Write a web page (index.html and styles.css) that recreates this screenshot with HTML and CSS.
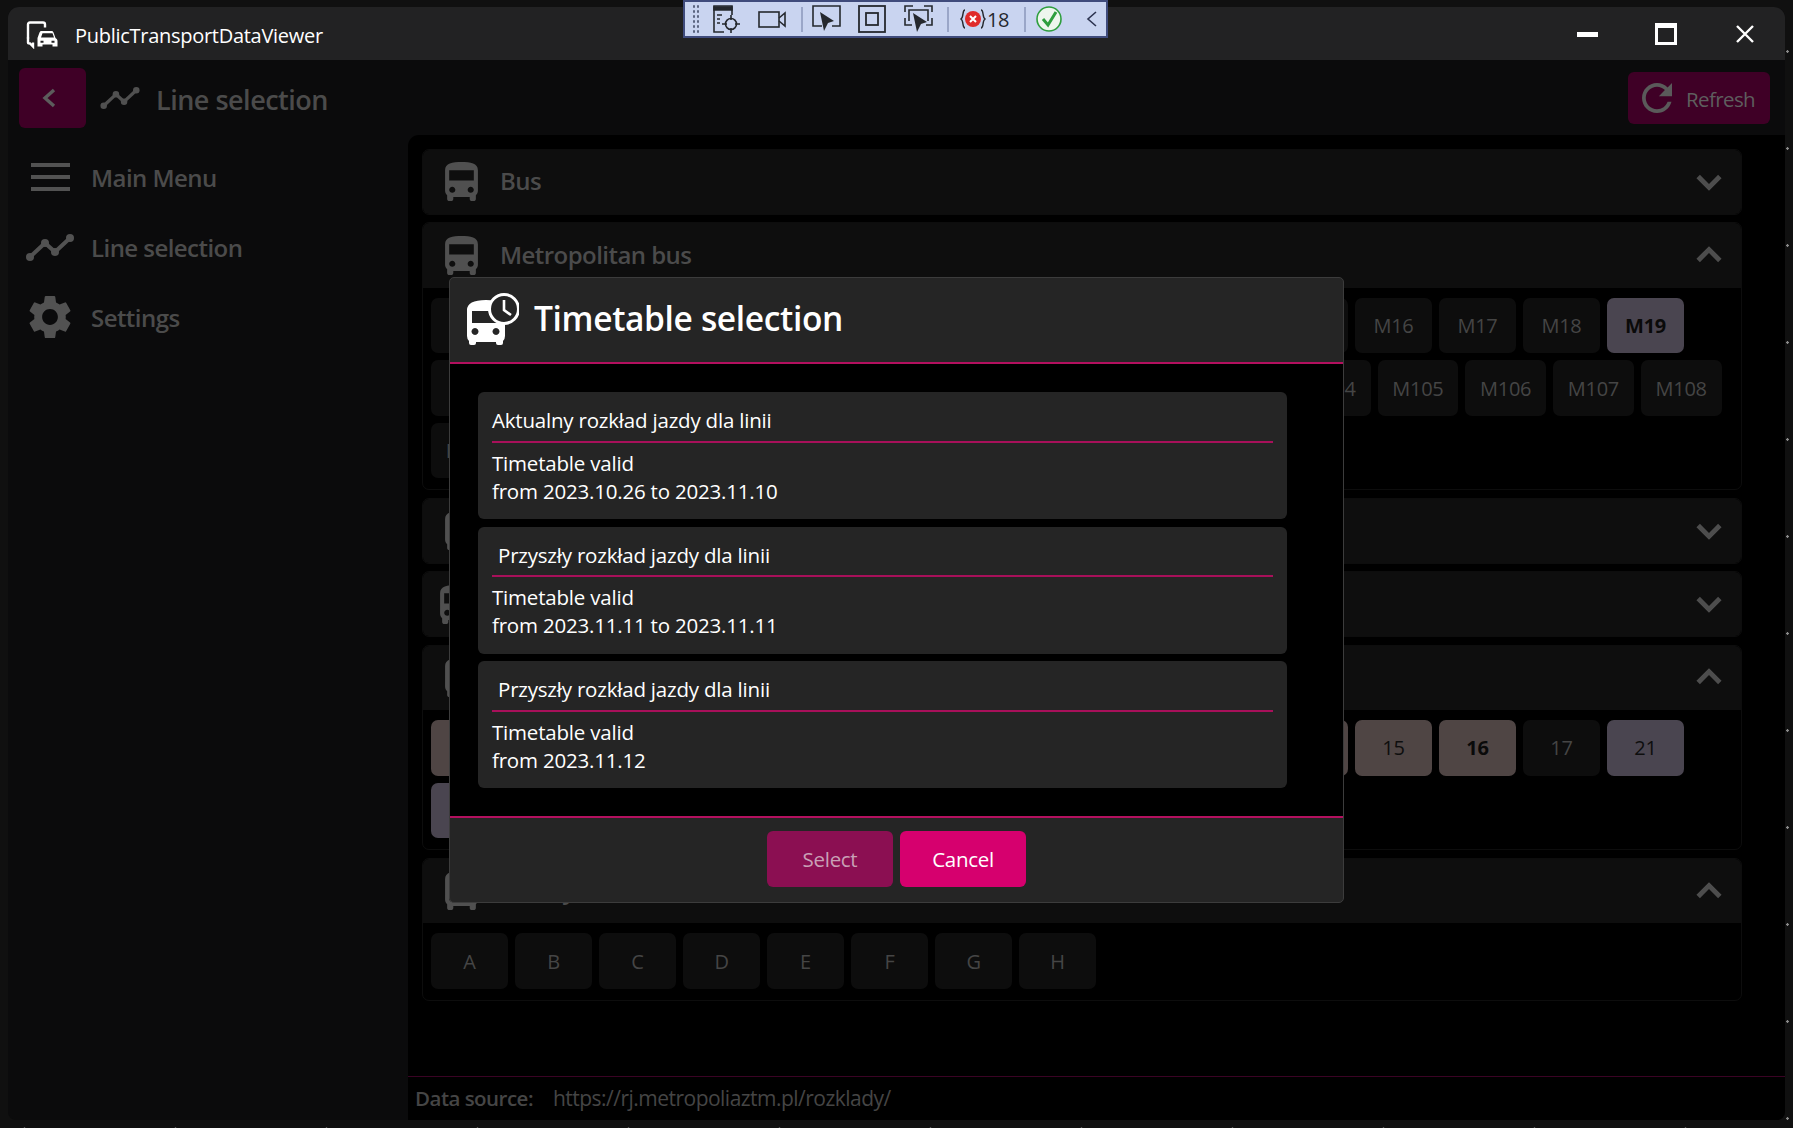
FILE: index.html
```html
<!DOCTYPE html>
<html lang="en">
<head>
<meta charset="utf-8">
<title>PublicTransportDataViewer</title>
<link rel="stylesheet" href="styles.css">
</head>
<body>
<svg class="defs" width="0" height="0" aria-hidden="true">
  <symbol id="bus" viewBox="4 2 16 19"><path d="M4 16c0 .88.39 1.67 1 2.22V20c0 .55.45 1 1 1h1c.55 0 1-.45 1-1v-1h8v1c0 .55.45 1 1 1h1c.55 0 1-.45 1-1v-1.78c.61-.55 1-1.34 1-2.22V6c0-3.5-3.58-4-8-4s-8 .5-8 4v10zm3.5 1c-.83 0-1.5-.67-1.5-1.5S6.67 14 7.5 14s1.5.67 1.5 1.5S8.33 17 7.5 17zm9 0c-.83 0-1.5-.67-1.5-1.5s.67-1.5 1.5-1.5 1.5.67 1.5 1.5-.67 1.5-1.5 1.5zm1.5-6H6V6h12v5z"/></symbol>
  <symbol id="line" viewBox="0 0 48 27"><path d="M4 23 L19 9 L29 18 L44 4" fill="none" stroke="currentColor" stroke-width="4" stroke-linejoin="round"/><circle cx="4" cy="23" r="4"/><circle cx="19" cy="9" r="4"/><circle cx="29" cy="18" r="4"/><circle cx="44" cy="4" r="4"/></symbol>
  <symbol id="down" viewBox="0 0 24 16"><path d="M2 3 L12 13 L22 3" fill="none" stroke="currentColor" stroke-width="4.5"/></symbol>
  <symbol id="up" viewBox="0 0 24 16"><path d="M2 13 L12 3 L22 13" fill="none" stroke="currentColor" stroke-width="4.5"/></symbol>
</svg>

<div class="toolbar">
  <span class="tb-grip"></span>
  <svg class="tb-ico" width="30" height="30" viewBox="0 0 30 30" fill="none" stroke="#25282e" stroke-width="1.6"><path d="M12 28H2V2h18v9" /><path d="M2 3h18v3H2z" fill="#25282e"/><path d="M5 11h5M5 15h3M5 19h3"/><circle cx="19" cy="20" r="5.5"/><path d="M19 11v5M19 24v5M10 20h5M23 20h5"/></svg>
  <svg class="tb-ico" width="30" height="30" viewBox="0 0 30 30" fill="none" stroke="#25282e" stroke-width="1.6"><rect x="1" y="8" width="20" height="15"/><path d="M21 14l6-5v13l-6-5"/></svg>
  <span class="tb-sep"></span>
  <svg class="tb-ico" width="30" height="30" viewBox="0 0 30 30" fill="none" stroke="#25282e" stroke-width="1.6"><path d="M10 22H1V2h27v20h-8"/><path d="M8 8l14 9-6 2-4 8z" fill="#25282e" stroke="none"/></svg>
  <svg class="tb-ico" width="30" height="30" viewBox="0 0 30 30" fill="none" stroke="#25282e" stroke-width="1.8"><rect x="1" y="2" width="26" height="26"/><rect x="8" y="9" width="12" height="12"/></svg>
  <svg class="tb-ico" width="30" height="30" viewBox="0 0 30 30" fill="none" stroke="#25282e" stroke-width="1.6"><path d="M1 8V2h8M20 2h8v6M1 14v7h7M28 14v7h-6M5 17V6h19v11"/><path d="M9 9l14 9-6 2-4 8z" fill="#25282e" stroke="none"/></svg>
  <span class="tb-sep"></span>
  <span class="tb-errors"><svg width="26" height="24" viewBox="0 0 26 24"><circle cx="13" cy="12" r="8" fill="#e02a2a"/><path d="M10 9l6 6M16 9l-6 6" stroke="#fff" stroke-width="2"/><path d="M5 3c-3 0-1 7-4 9 3 2 1 9 4 9M21 3c3 0 1 7 4 9-3 2-1 9-4 9" fill="none" stroke="#25282e" stroke-width="1.4"/></svg>18</span>
  <span class="tb-sep"></span>
  <svg class="tb-ico tb-check" width="28" height="28" viewBox="0 0 28 28"><circle cx="14" cy="14" r="12" fill="#eef6ee" stroke="#2e9e3e" stroke-width="1.6"/><path d="M8 14l5 6 8-13" fill="none" stroke="#2e9e3e" stroke-width="3"/></svg>
  <svg class="tb-chev" width="14" height="20" viewBox="0 0 14 20"><path d="M11 3L3 10l8 7" fill="none" stroke="#2c3350" stroke-width="1.6"/></svg>
</div>

<div class="window">
  <header class="titlebar">
    <svg class="logo" width="33" height="28" viewBox="0 0 33 27"><path d="M2 17V3q0-2 2-2h13q2 0 2 2v3" fill="none" stroke="#fff" stroke-width="2.4"/><path d="M2 16v5q0 1 2 1l3 3v-4" fill="none" stroke="#fff" stroke-width="2.4"/><path d="M12 16l2-6q.5-1.5 2-1.5h10q1.5 0 2 1.5l2 6q2 1 2 3v6h-5v-2H17v2h-5v-6q0-2 0-3zm3.5-.5h13l-1.500-4.500H17zM15 19v2h3v-2zm11 0v2h3v-2z" fill="#fff" fill-rule="evenodd" transform="translate(-.5 1.5) scale(1 .94)"/></svg>
    <span class="app-name">PublicTransportDataViewer</span>
    <div class="win-controls">
      <span class="win-min"></span>
      <span class="win-max"></span>
      <svg class="win-close" width="18" height="18" viewBox="0 0 18 18"><path d="M1 1l16 16M17 1L1 17" stroke="#fff" stroke-width="2.4"/></svg>
    </div>
  </header>

  <div class="appbar">
    <button class="back"><svg width="14" height="20" viewBox="0 0 14 20"><path d="M12 2L3 10l9 8" fill="none" stroke="#5c5c5c" stroke-width="3.4"/></svg></button>
    <svg class="ico-line appbar-line"><use href="#line"/></svg>
    <h1 class="page-title">Line selection</h1>
    <button class="refresh">
      <svg width="30" height="30" viewBox="4 4 16 16"><path d="M17.65 6.35C16.2 4.9 14.21 4 12 4c-4.42 0-7.99 3.58-7.99 8s3.57 8 7.99 8c3.73 0 6.84-2.55 7.73-6h-2.08c-.82 2.33-3.04 4-5.65 4-3.31 0-6-2.69-6-6s2.69-6 6-6c1.66 0 3.14.69 4.22 1.78L13 11h7V4l-2.35 2.35z" fill="#5a5a5a"/></svg>
      <span>Refresh</span>
    </button>
  </div>

  <div class="main">
    <nav class="sidebar">
      <a class="nav-item"><span class="nav-ico"><span class="burger"><i></i><i></i><i></i></span></span>Main Menu</a>
      <a class="nav-item"><span class="nav-ico"><svg class="ico-line nav-line"><use href="#line"/></svg></span>Line selection</a>
      <a class="nav-item"><span class="nav-ico"><svg class="gear" width="44" height="46" viewBox="2.5 1.5 19 21"><path d="M19.14 12.94c.04-.3.06-.61.06-.94 0-.32-.02-.64-.07-.94l2.03-1.58a.49.49 0 0 0 .12-.61l-1.92-3.32a.488.488 0 0 0-.59-.22l-2.39.96c-.5-.38-1.03-.7-1.62-.94l-.36-2.54a.484.484 0 0 0-.48-.41h-3.84c-.24 0-.43.17-.47.41l-.36 2.54c-.59.24-1.13.57-1.62.94l-2.39-.96c-.22-.08-.47 0-.59.22L2.74 8.87c-.12.21-.08.47.12.61l2.03 1.58c-.05.3-.09.63-.09.94s.02.64.07.94l-2.03 1.58a.49.49 0 0 0-.12.61l1.92 3.32c.12.22.37.29.59.22l2.39-.96c.5.38 1.03.7 1.62.94l.36 2.54c.05.24.24.41.48.41h3.84c.24 0 .44-.17.47-.41l.36-2.54c.59-.24 1.13-.56 1.62-.94l2.39.96c.22.08.47 0 .59-.22l1.92-3.32c.12-.22.07-.47-.12-.61l-2.01-1.58zM12 15.6c-1.98 0-3.6-1.62-3.6-3.6s1.62-3.6 3.6-3.6 3.6 1.62 3.6 3.6-1.62 3.6-3.6 3.6z" fill="#525252"/></svg></span>Settings</a>
    </nav>

    <section class="content">
      <div class="cards">
        <article class="card">
          <div class="card-head"><svg class="ico-bus"><use href="#bus"/></svg><h2>Bus</h2><svg class="chev"><use href="#down"/></svg></div>
        </article>

        <article class="card">
          <div class="card-head"><svg class="ico-bus"><use href="#bus"/></svg><h2>Metropolitan bus</h2><svg class="chev"><use href="#up"/></svg></div>
          <div class="lines">
            <button class="ln"></button><button class="ln"></button><button class="ln"></button><button class="ln"></button><button class="ln"></button><button class="ln"></button><button class="ln"></button><button class="ln"></button><button class="ln"></button><button class="ln"></button><button class="ln"></button><button class="ln">M16</button><button class="ln">M17</button><button class="ln">M18</button><button class="ln sel-purple"><b>M19</b></button>
            <button class="ln"></button><button class="ln"></button><button class="ln"></button><button class="ln"></button><button class="ln"></button><button class="ln wide"></button><button class="ln wide"></button><button class="ln wide"></button><button class="ln wide"></button><button class="ln wide"></button><button class="ln wide">M104</button><button class="ln wide">M105</button><button class="ln wide">M106</button><button class="ln wide">M107</button><button class="ln wide">M108</button><button class="ln wide">M109</button>
          </div>
        </article>

        <article class="card">
          <div class="card-head"><svg class="ico-bus"><use href="#bus"/></svg><svg class="chev"><use href="#down"/></svg></div>
        </article>

        <article class="card">
          <div class="card-head"><svg class="ico-bus ico-shift"><use href="#bus"/></svg><svg class="chev"><use href="#down"/></svg></div>
        </article>

        <article class="card">
          <div class="card-head"><svg class="ico-bus"><use href="#bus"/></svg><svg class="chev"><use href="#up"/></svg></div>
          <div class="lines">
            <button class="ln brown"></button><button class="ln"></button><button class="ln"></button><button class="ln"></button><button class="ln"></button><button class="ln"></button><button class="ln"></button><button class="ln"></button><button class="ln"></button><button class="ln"></button><button class="ln brown"></button><button class="ln brown">15</button><button class="ln brown"><b>16</b></button><button class="ln">17</button><button class="ln sel-purple">21</button><button class="ln sel-purple"></button>
          </div>
        </article>

        <article class="card">
          <div class="card-head"><svg class="ico-bus"><use href="#bus"/></svg><h2>Trolley</h2><svg class="chev"><use href="#up"/></svg></div>
          <div class="lines">
            <button class="ln">A</button><button class="ln">B</button><button class="ln">C</button><button class="ln">D</button><button class="ln">E</button><button class="ln">F</button><button class="ln">G</button><button class="ln">H</button>
          </div>
        </article>
      </div>
      <footer class="source"><b>Data source:</b><span>https://rj.metropoliaztm.pl/rozklady/</span></footer>
    </section>
  </div>

  <div class="modal">
    <div class="modal-head">
      <svg width="53" height="52" viewBox="0 0 53 52">
        <g fill="#fff"><path d="M1 17q0-10 19-10t19 10v26q0 3-2 5v2q0 2-2 2h-3q-2 0-2-2v-1H10v1q0 2-2 2H5q-2 0-2-2v-2q-2-2-2-5zm5 1v12h27V18zm3 17a3.5 3.5 0 1 0 .01 0zm21 0a3.5 3.5 0 1 0 .01 0z" fill-rule="evenodd"/></g>
        <circle cx="38" cy="16" r="14.5" fill="#252525" stroke="#fff" stroke-width="3"/>
        <path d="M38 7v10l7 5" fill="none" stroke="#fff" stroke-width="2.6"/>
      </svg>
      <h2>Timetable selection</h2>
    </div>
    <div class="modal-body">
      <div class="tt">
        <div class="tt-title">Aktualny rozkład jazdy dla linii</div>
        <div class="tt-text">Timetable valid<br>from 2023.10.26 to 2023.11.10</div>
      </div>
      <div class="tt">
        <div class="tt-title tt-indent">Przyszły rozkład jazdy dla linii</div>
        <div class="tt-text">Timetable valid<br>from 2023.11.11 to 2023.11.11</div>
      </div>
      <div class="tt">
        <div class="tt-title tt-indent">Przyszły rozkład jazdy dla linii</div>
        <div class="tt-text">Timetable valid<br>from 2023.11.12</div>
      </div>
    </div>
    <div class="modal-foot">
      <button class="act act-off">Select</button>
      <button class="act act-on">Cancel</button>
    </div>
  </div>
</div>
</body>
</html>
```

FILE: styles.css
```css
* { box-sizing: border-box; }
html, body { margin: 0; height: 100%; }
body {
  position: relative;
  width: 1793px;
  height: 1128px;
  overflow: hidden;
  padding: 7px 8px 8px;
  font-family: "Open Sans", "Noto Sans", sans-serif;
  background-color: #101010;
  background-image:
    radial-gradient(circle, #8a8a8a 0 1px, transparent 1.5px),
    radial-gradient(circle, #555 0 1px, transparent 1.5px);
  background-size: 233px 97px, 151px 61px;
  background-position: 40px 3px, 100px 0;
}
button { font-family: inherit; border: 0; padding: 0; }
h1, h2 { margin: 0; }
.defs { position: absolute; }

/* debug toolbar overlay */
.toolbar {
  position: absolute;
  left: 683px;
  top: 0;
  z-index: 5;
  width: 425px;
  height: 38px;
  display: flex;
  align-items: center;
  background: #c9d4f0;
  border: 2px solid #3f4b7c;
  padding-left: 7px;
}
.tb-grip {
  width: 8px;
  height: 30px;
  margin-right: 12px;
  background-image: radial-gradient(circle, #5a6480 0 1px, transparent 1.5px);
  background-size: 4px 5px;
}
.tb-ico { flex: none; margin-right: 16px; }
.tb-check { margin-right: 14px; }
.tb-sep { flex: none; width: 2px; height: 25px; background: #9aa6c8; margin-right: 9px; margin-left: -3px; }
.tb-errors { flex: none; display: flex; align-items: center; gap: 1px; width: 50px; margin: 0 17px 0 2px; font-size: 20px; letter-spacing: -.4px; color: #25282e; }
.tb-chev { flex: none; margin-left: 8px; }

/* window */
.window {
  position: relative;
  width: 1777px;
  height: 1113px;
  display: flex;
  flex-direction: column;
  background: #0b0b0c;
  border-radius: 11px 11px 8px 8px;
  overflow: hidden;
}
.titlebar {
  flex: none;
  height: 53px;
  display: flex;
  align-items: center;
  padding-left: 18px;
  background: #222223;
}
.logo { flex: none; margin-top: 2px; }
.app-name { margin-left: 16px; margin-top: 3px; font-size: 20px; letter-spacing: -.28px; color: #fff; }
.win-controls { margin-left: auto; height: 100%; position: relative; display: flex; align-items: center; padding-right: 31px; }
.win-min { width: 21px; height: 5px; background: #fff; margin-right: 57px; margin-top: 1px; }
.win-max { width: 22px; height: 22px; border: 3px solid #fff; border-top-width: 5px; margin-right: 59px; margin-top: 1px; }
.win-close { display: block; margin-top: 1px; }

.appbar {
  flex: none;
  height: 75px;
  display: flex;
  align-items: center;
  padding: 0 15px 0 11px;
  color: #4a4a4a;
}
.back {
  width: 67px;
  height: 60px;
  margin-right: 14px;
  border-radius: 6px;
  background: #3f0026;
  display: flex;
  align-items: center;
  justify-content: center;
  padding-right: 8px;
}
.ico-line { fill: currentColor; display: block; }
.appbar-line { width: 40px; height: 22px; color: #505050; }
.page-title { margin-left: 16px; margin-top: 3px; font-size: 27px; font-weight: 600; letter-spacing: -.5px; color: #4b4b4b; }
.refresh {
  margin-left: auto;
  width: 142px;
  height: 52px;
  margin-top: 1px;
  border-radius: 6px;
  background: #3f0026;
  color: #5e5e5e;
  font-size: 20.5px;
  letter-spacing: -.6px;
  display: flex;
  align-items: center;
  gap: 14px;
  padding-left: 14px;
}
.refresh span { margin-top: 2px; }

.main { flex: 1; min-height: 0; display: flex; }
.sidebar { flex: none; width: 400px; padding-top: 7px; }
.nav-item {
  height: 70px;
  display: flex;
  align-items: center;
  font-size: 24px;
  font-weight: 600;
  letter-spacing: -.55px;
  color: #4b4b4b;
}
.nav-ico { flex: none; width: 83px; display: flex; justify-content: center; padding-left: 1px; }
.burger { display: flex; flex-direction: column; gap: 8px; width: 39px; }
.burger i { display: block; height: 4px; background: #525252; }
.nav-line { width: 48px; height: 27px; color: #525252; }
.gear { margin-left: -1px; }

.content {
  flex: 1;
  min-width: 0;
  display: flex;
  flex-direction: column;
  background: #000;
  border-radius: 11px 0 0 0;
}
.cards { flex: 1; display: flex; flex-direction: column; gap: 7.75px; padding: 14px 43px 0 14px; }
.card {
  border: 1px solid #0d0d0d;
  border-radius: 7px;
  overflow: hidden;
  flex: none;
}
.card-head {
  height: 65.5px;
  margin: -1px -1px -1px;
  display: flex;
  align-items: center;
  padding: 0 20px 0 23px;
  background: #0e0e0e;
  color: #505050;
}
.card-head h2 { margin-left: 22px; margin-top: -2px; font-size: 24px; font-weight: 600; letter-spacing: -.55px; color: #4b4b4b; }
.ico-bus { width: 33px; height: 39px; fill: currentColor; flex: none; }
.ico-shift { margin-left: -5px; margin-right: 5px; }
.chev { width: 26px; height: 18px; margin-left: auto; color: #4d4d4d; }
.lines {
  display: flex;
  flex-wrap: wrap;
  gap: 7px;
  padding: 11px 0 11px 8px;
}
.ln {
  width: 77px;
  height: 55.5px;
  border-radius: 7px;
  background: #0d0d0d;
  color: #454545;
  font-size: 20px;
  letter-spacing: -.3px;
}
.ln b { font-weight: 700; color: #0a0a0a; }
.ln.wide { width: 80.75px; }
.ln.sel-purple { background: #4a4550; color: #0e0e0e; }
.ln.brown { background: #4f4544; color: #0e0e0e; }

.source {
  flex: none;
  height: 44px;
  padding-bottom: 2px;
  border-top: 1px solid #3a0324;
  display: flex;
  align-items: center;
  padding-left: 7px;
  font-size: 21px;
  letter-spacing: -.52px;
  color: #454545;
}
.source b { font-weight: 600; width: 138px; font-size: 20.5px; }

/* dialog */
.modal {
  position: absolute;
  left: 441px;
  top: 270px;
  width: 895px;
  height: 626px;
  display: flex;
  flex-direction: column;
  background: #252525;
  border: 1px solid #3c3c3c;
  border-radius: 5px;
  overflow: hidden;
}
.modal-head {
  flex: none;
  height: 86px;
  display: flex;
  align-items: center;
  padding: 0 0 2px 16px;
  border-bottom: 2px solid #b3105f;
}
.modal-head h2 { margin-left: 15px; margin-top: -2px; font-size: 33.5px; font-weight: 600; letter-spacing: -.35px; color: #fff; }
.modal-body {
  flex: 1;
  display: flex;
  flex-direction: column;
  gap: 7.5px;
  padding: 28px 56px 0 28px;
  background: #000;
}
.tt {
  height: 127px;
  padding: 0 14px;
  border-radius: 6px;
  background: #252525;
  color: #fff;
  font-size: 20.5px;
  letter-spacing: -.2px;
}
.tt-title {
  height: 50.5px;
  border-bottom: 2px solid #a8105a;
  padding-top: 14px;
  line-height: 28px;
}
.tt-indent { padding-left: 6px; }
.tt-text { padding-top: 6px; line-height: 28px; }
.modal-foot {
  flex: none;
  height: 86px;
  display: flex;
  justify-content: center;
  gap: 7px;
  padding: 13px 0 0 0;
  border-top: 2px solid #b3105f;
}
.act { width: 126px; height: 56px; border-radius: 6px; font-size: 20.5px; letter-spacing: -.3px; }
.act-off { background: #8b0f52; color: #c9a0b6; }
.act-on { background: #d6006e; color: #fff; }
```
